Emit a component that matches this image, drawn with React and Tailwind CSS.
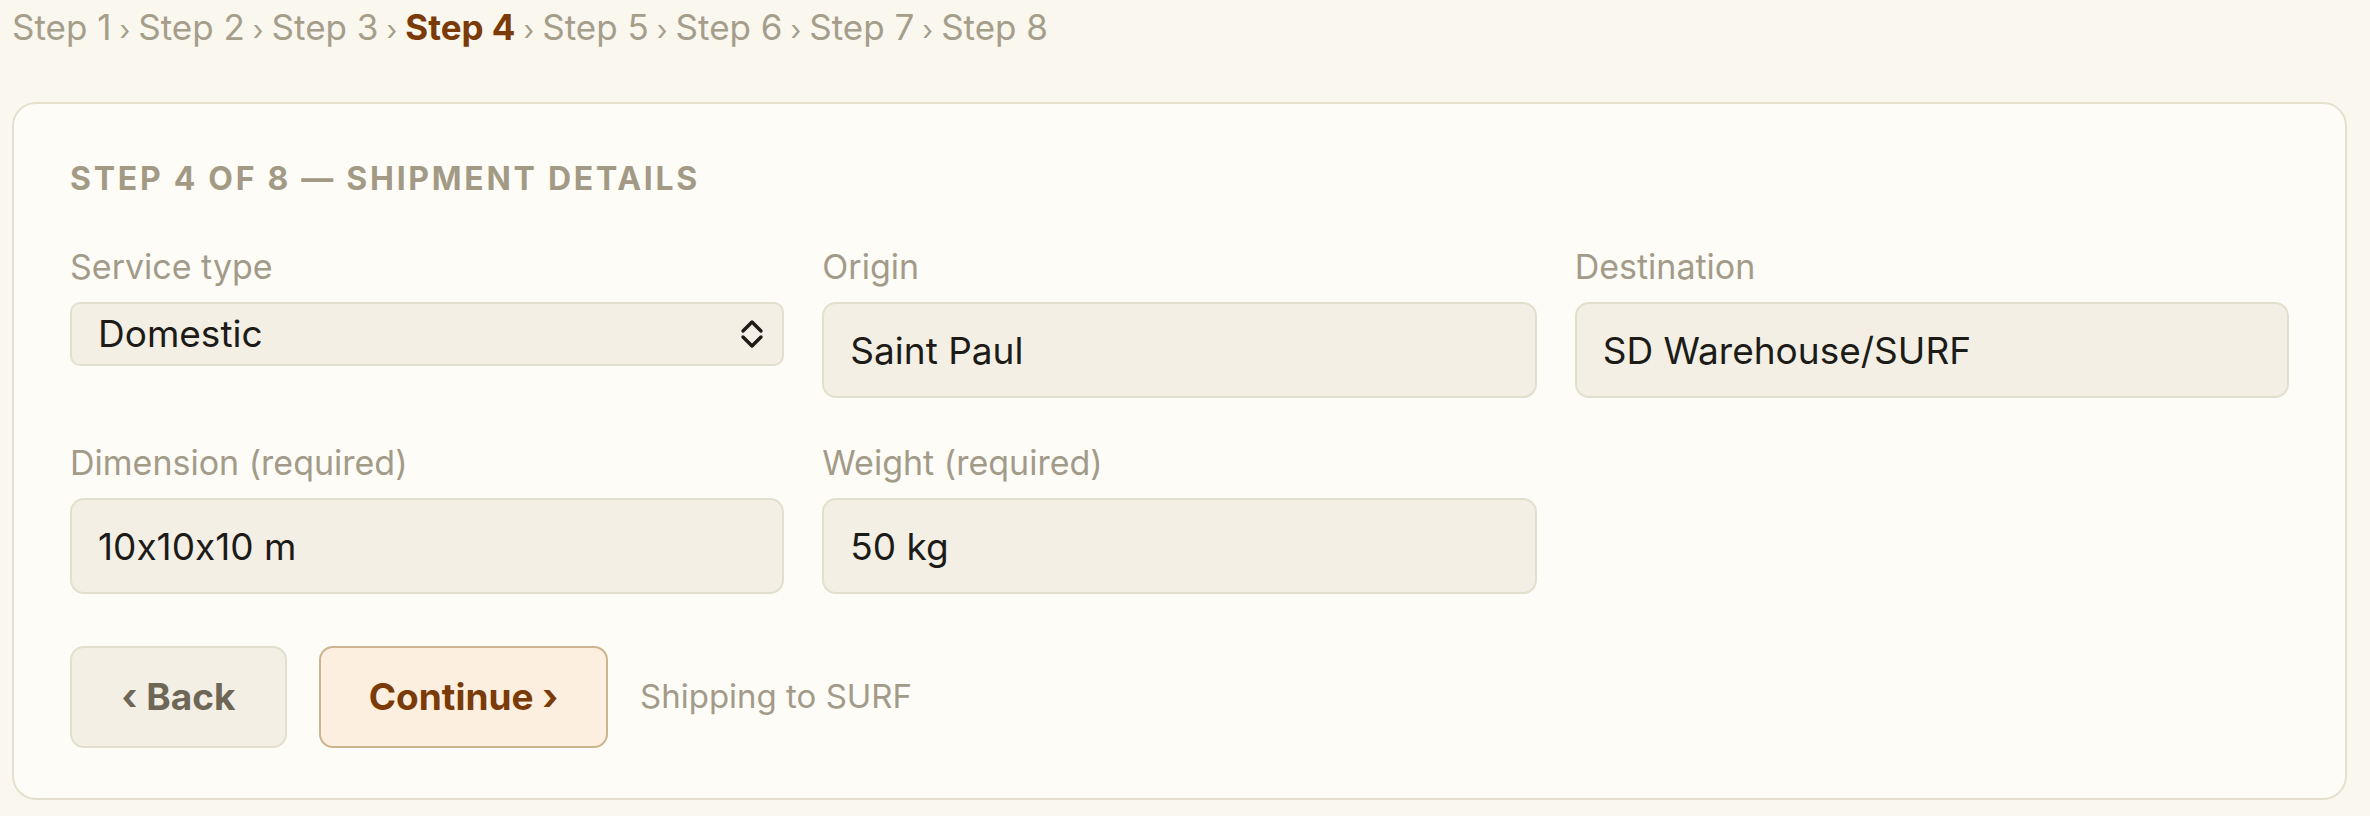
import React from 'react'

const steps = ['Step 1', 'Step 2', 'Step 3', 'Step 4', 'Step 5', 'Step 6', 'Step 7', 'Step 8']

function Field({ label, value }) {
  return (
    <div className="flex flex-col">
      <label className="text-[34px] leading-[40px] text-[#a39b89]">{label}</label>
      <input
        readOnly
        value={value}
        className="mt-[15px] h-[96px] w-full rounded-[14px] border-2 border-[#e3dfce] bg-[#f3efe4] px-[26px] text-[37px] text-[#1d1b17] outline-none [font-feature-settings:'calt'_0]"
      />
    </div>
  )
}

function Chevrons() {
  return (
    <svg width="24" height="32" viewBox="0 0 24 32" fill="none" stroke="#1d1b17" strokeWidth="3.4" strokeLinecap="round" strokeLinejoin="round">
      <path d="M3 13 L12 4 L21 13" />
      <path d="M3 19 L12 28 L21 19" />
    </svg>
  )
}

export default function App() {
  return (
    <div className="min-h-screen bg-[#faf7ef] pl-[12px] pt-[7px] font-['Inter',sans-serif]">
      <nav className="text-[35px] leading-[40px] text-[#a59e8b]">
        {steps.map((s, i) => (
          <span key={s}>
            {i > 0 && <span className="mx-[8px] text-[28px]">›</span>}
            <span className={i === 3 ? 'font-bold text-[#7a3b08]' : ''}>{s}</span>
          </span>
        ))}
      </nav>

      <div className="mt-[52px] w-[2335px] rounded-[24px] border-2 border-[#e5e0ce] bg-[#fefcf7] px-[56px] pt-[57px] pb-[50px]">
        <h2 className="text-[32px] font-bold uppercase leading-[36px] tracking-[0.085em] text-[#a39a85]">
          Step 4 of 8 — Shipment details
        </h2>

        <div className="mt-[50px] grid grid-cols-3 gap-x-[38px] gap-y-[45px]">
          <div className="flex flex-col">
            <label className="text-[34px] leading-[40px] text-[#a39b89]">Service type</label>
            <div className="mt-[15px] flex h-[64px] items-center rounded-[10px] border-2 border-[#e3dfce] bg-[#f3efe4] pl-[26px] pr-[18px] text-[37px] text-[#1d1b17]">
              <span className="flex-1">Domestic</span>
              <Chevrons />
            </div>
          </div>
          <Field label="Origin" value="Saint Paul" />
          <Field label="Destination" value="SD Warehouse/SURF" />
          <Field label="Dimension (required)" value="10x10x10 m" />
          <Field label="Weight (required)" value="50 kg" />
        </div>

        <div className="mt-[52px] flex items-center gap-[32px]">
          <button className="h-[102px] w-[217px] rounded-[14px] border-2 border-[#e3dfce] bg-[#f3efe4] text-[37px] font-bold text-[#6e6656]">
            ‹ Back
          </button>
          <button className="h-[102px] w-[289px] rounded-[14px] border-2 border-[#cdb48f] bg-[#fdefdf] text-[37px] font-bold text-[#7a3b08]">
            Continue ›
          </button>
          <span className="text-[33px] text-[#a39b89]">Shipping to SURF</span>
        </div>
      </div>
    </div>
  )
}
